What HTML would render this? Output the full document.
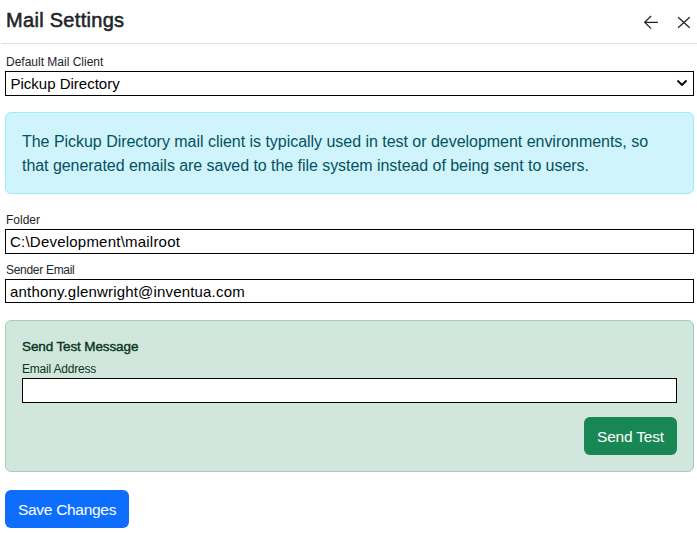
<!DOCTYPE html>
<html><head><meta charset="utf-8">
<style>
html,body{margin:0;padding:0;background:#fff;width:697px;height:533px;overflow:hidden;}
body{position:relative;font-family:"Liberation Sans",sans-serif;color:#212529;}
.t{position:absolute;line-height:1;white-space:pre;}
.box{position:absolute;box-sizing:border-box;}
</style></head><body>
<div class="t" id="title" style="left:6px;top:10px;font-size:20px;font-weight:400;-webkit-text-stroke:0.55px #212529;letter-spacing:0.3px;">Mail Settings</div>
<svg class="box" style="left:640px;top:12px" width="22" height="22" viewBox="0 0 22 22">
  <path d="M4.7 10.3 H17.9 M11.1 4 L4.7 10.3 L11.1 16.6" fill="none" stroke="#212529" stroke-width="1.25"/>
</svg>
<svg class="box" style="left:672px;top:12px" width="22" height="22" viewBox="0 0 22 22">
  <path d="M6.1 5.2 L17.7 15.8 M17.7 5.2 L6.1 15.8" fill="none" stroke="#212529" stroke-width="1.25"/>
</svg>
<div class="box" style="left:1px;top:43px;width:696px;height:1px;background:#dee2e6"></div>

<div class="t" style="left:6px;top:56px;font-size:12px;">Default Mail Client</div>
<div class="box" style="left:5px;top:71px;width:689px;height:25px;border:1px solid #000;"></div>
<div class="t" style="left:10.5px;top:76px;font-size:15px;color:#000">Pickup Directory</div>
<svg class="box" style="left:672px;top:76px" width="20" height="14" viewBox="0 0 20 14">
  <path d="M5.5 4.5 L10 9 L14.5 4.5" fill="none" stroke="#000" stroke-width="1.8"/>
</svg>

<div class="box" style="left:5px;top:112px;width:689px;height:82px;background:#cff4fc;border:1px solid #9eeaf9;border-radius:6px;"></div>
<div class="t" style="left:22px;top:134px;letter-spacing:-0.03px;font-size:16px;color:#055160">The Pickup Directory mail client is typically used in test or development environments, so</div>
<div class="t" style="left:22px;top:158px;letter-spacing:-0.05px;font-size:16px;color:#055160">that generated emails are saved to the file system instead of being sent to users.</div>

<div class="t" style="left:6px;top:214px;font-size:12px;">Folder</div>
<div class="box" style="left:5px;top:229px;width:689px;height:25px;border:1px solid #000;"></div>
<div class="t" style="left:10px;top:234px;font-size:15px;letter-spacing:0.22px;color:#000">C:\Development\mailroot</div>

<div class="t" style="left:6px;top:264px;font-size:12px;letter-spacing:-0.3px;">Sender Email</div>
<div class="box" style="left:5px;top:279px;width:689px;height:24px;border:1px solid #000;"></div>
<div class="t" style="left:10px;top:284px;font-size:15px;letter-spacing:0.18px;color:#000">anthony.glenwright@inventua.com</div>

<div class="box" style="left:5px;top:320px;width:689px;height:152px;background:#d1e7dd;border:1px solid #a3cfbb;border-radius:6px;"></div>
<div class="t" style="left:22px;top:340px;font-size:13.5px;font-weight:400;-webkit-text-stroke:0.4px #0a3622;letter-spacing:-0.12px;color:#0a3622">Send Test Message</div>
<div class="t" style="left:22px;top:363px;font-size:12px;letter-spacing:-0.2px;color:#0a3622">Email Address</div>
<div class="box" style="left:22px;top:378px;width:655px;height:25px;border:1px solid #000;background:#fff"></div>
<div class="box" style="left:584px;top:417px;width:93px;height:38px;background:#198754;border-radius:6px;"></div>
<div class="t" style="left:597px;top:429px;font-size:15.5px;letter-spacing:-0.2px;color:#fff">Send Test</div>

<div class="box" style="left:5px;top:490px;width:124px;height:38px;background:#0d6efd;border-radius:6px;"></div>
<div class="t" style="left:18px;top:502px;font-size:15.5px;letter-spacing:-0.3px;color:#fff">Save Changes</div>
</body></html>
